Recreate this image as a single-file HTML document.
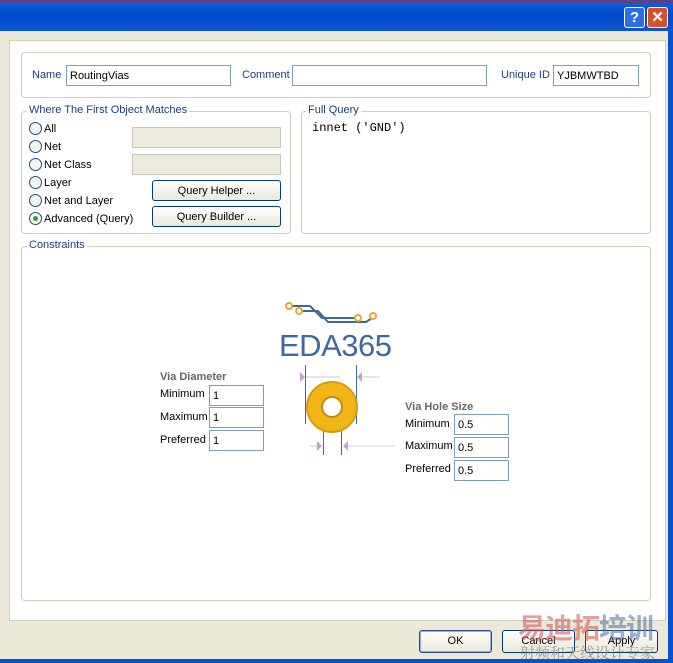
<!DOCTYPE html>
<html><head><style>
*{margin:0;padding:0;box-sizing:border-box}
body{width:673px;height:663px;position:relative;overflow:hidden;background:#ece9d8;font-family:"Liberation Sans",sans-serif;font-size:11px;color:#000}
.a{position:absolute}
.box{position:absolute;border:1px solid #d0d0bf;border-radius:4px}
.leg{position:absolute;background:#fff;padding:0 2px;color:#1a3f7a;font-size:11px}
.inp{position:absolute;border:1px solid #7f9db9;background:#fff;height:21px;padding:4px 3px 0;font-size:11px;line-height:13px}
.lbl{position:absolute;font-size:11px}
.rad{position:absolute;width:13px;height:13px;border:1px solid #1c5180;border-radius:50%;background:#f4f4f0}
.btn{position:absolute;border:1px solid #003c74;border-radius:3px;background:linear-gradient(#fff,#ece9d8);text-align:center;font-size:11px;line-height:20px}
</style></head><body>
<div class="a" style="left:0;top:0;width:673px;height:3px;background:#5a3f8a"></div>
<div class="a" style="left:0;top:3px;width:673px;height:28px;background:linear-gradient(#0a5fe0,#0049c8 40%,#0a54d8)"></div>
<div class="a" style="left:624px;top:7px;width:21px;height:21px;border:1px solid #fff;border-radius:3px;background:#2a6ee8;color:#fff;font-weight:bold;font-size:15px;text-align:center;line-height:19px">?</div>
<div class="a" style="left:647px;top:7px;width:21px;height:21px;border:1px solid #fff;border-radius:3px;background:#d8502a;color:#fff;font-weight:bold;font-size:15px;text-align:center;line-height:19px">✕</div>
<div class="a" style="left:668px;top:31px;width:5px;height:632px;background:#0a4fd0"></div>
<div class="a" style="left:0;top:659px;width:673px;height:4px;background:#0a4fd0"></div>
<div class="a" style="left:9px;top:40px;width:657px;height:581px;background:#fff;border:1px solid #d0d0bf"></div>

<div class="box" style="left:21px;top:52px;width:630px;height:46px"></div>
<div class="lbl" style="left:32px;top:69px;color:#1a3f7a">Name</div>
<div class="inp" style="left:66px;top:65px;width:165px">RoutingVias</div>
<div class="lbl" style="left:242px;top:69px;color:#1a3f7a">Comment</div>
<div class="inp" style="left:292px;top:65px;width:195px"></div>
<div class="lbl" style="left:501px;top:69px;color:#1a3f7a">Unique ID</div>
<div class="inp" style="left:553px;top:65px;width:86px">YJBMWTBD</div>

<div class="box" style="left:21px;top:111px;width:270px;height:123px"></div>
<div class="leg" style="left:27px;top:104px">Where The First Object Matches</div>
<div class="rad" style="left:29px;top:122px"></div><div class="lbl" style="left:44px;top:123px">All</div>
<div class="rad" style="left:29px;top:140px"></div><div class="lbl" style="left:44px;top:141px">Net</div>
<div class="rad" style="left:29px;top:158px"></div><div class="lbl" style="left:44px;top:159px">Net Class</div>
<div class="rad" style="left:29px;top:176px"></div><div class="lbl" style="left:44px;top:177px">Layer</div>
<div class="rad" style="left:29px;top:194px"></div><div class="lbl" style="left:44px;top:195px">Net and Layer</div>
<div class="rad" style="left:29px;top:212px"><div class="a" style="left:3px;top:3px;width:5px;height:5px;border-radius:50%;background:#3a9a3a"></div></div><div class="lbl" style="left:44px;top:213px">Advanced (Query)</div>
<div class="a" style="left:132px;top:127px;width:149px;height:21px;border:1px solid #c9c7ba;background:#ebeadb"></div>
<div class="a" style="left:132px;top:154px;width:149px;height:21px;border:1px solid #c9c7ba;background:#ebeadb"></div>
<div class="btn" style="left:152px;top:180px;width:129px;height:21px">Query Helper ...</div>
<div class="btn" style="left:152px;top:206px;width:129px;height:21px">Query Builder ...</div>

<div class="box" style="left:301px;top:111px;width:350px;height:123px"></div>
<div class="leg" style="left:306px;top:104px">Full Query</div>
<div class="a" style="left:312px;top:121px;font-family:'Liberation Mono',monospace;font-size:12px">innet ('GND')</div>

<div class="box" style="left:21px;top:246px;width:630px;height:355px"></div>
<div class="leg" style="left:27px;top:239px">Constraints</div>

<svg class="a" style="left:280px;top:298px" width="100" height="30">
<path d="M9 8 H30 L42 20 H78" stroke="#3e6a8e" stroke-width="2" fill="none"/>
<path d="M19 13 H38 L48 24 H86 L92 20" stroke="#3e6a8e" stroke-width="2" fill="none"/>
<circle cx="9" cy="8" r="3" fill="#fff" stroke="#e8a830" stroke-width="2"/>
<circle cx="19" cy="13" r="3" fill="#fff" stroke="#e8a830" stroke-width="2"/>
<circle cx="78" cy="20" r="3" fill="#fff" stroke="#e8a830" stroke-width="2"/>
<circle cx="93" cy="18" r="3" fill="#fff" stroke="#e8a830" stroke-width="2"/>
</svg>
<div class="a" style="left:279px;top:328px;font-size:31px;color:#3e6a9e;letter-spacing:-0.5px;line-height:36px">EDA365</div>

<svg class="a" style="left:250px;top:362px" width="170" height="95">
<g stroke="#ccc" stroke-width="1" fill="none">
<line x1="52" y1="15" x2="90" y2="15"/><line x1="112" y1="15" x2="130" y2="15"/>
<line x1="60" y1="84" x2="70" y2="84"/><line x1="95" y1="84" x2="145" y2="84"/>
</g>
<g stroke="#3e6a9e" stroke-width="1"><line x1="55.5" y1="3" x2="55.5" y2="62"/><line x1="106.5" y1="3" x2="106.5" y2="62"/>
<line x1="73.5" y1="60" x2="73.5" y2="93"/><line x1="91.5" y1="60" x2="91.5" y2="93"/></g>
<g fill="#c8a0d0"><path d="M50 10 L55 15 L50 20Z"/><path d="M112 10 L107 15 L112 20Z"/><path d="M67 79 L72 84 L67 89Z"/><path d="M98 79 L93 84 L98 89Z"/></g>
<circle cx="82" cy="45" r="25" fill="#f1b517" stroke="#d69a10" stroke-width="2"/>
<circle cx="82" cy="45" r="10" fill="#fff" stroke="#c08a10" stroke-width="2"/>
</svg>
<div class="lbl" style="left:160px;top:371px;font-weight:bold;color:#666;font-size:11px">Via Diameter</div>
<div class="lbl" style="left:160px;top:388px">Minimum</div><div class="inp" style="left:209px;top:385px;width:55px">1</div>
<div class="lbl" style="left:160px;top:411px">Maximum</div><div class="inp" style="left:209px;top:407px;width:55px">1</div>
<div class="lbl" style="left:160px;top:434px">Preferred</div><div class="inp" style="left:209px;top:430px;width:55px">1</div>
<div class="lbl" style="left:405px;top:401px;font-weight:bold;color:#666">Via Hole Size</div>
<div class="lbl" style="left:405px;top:418px">Minimum</div><div class="inp" style="left:454px;top:414px;width:55px">0.5</div>
<div class="lbl" style="left:405px;top:440px">Maximum</div><div class="inp" style="left:454px;top:437px;width:55px">0.5</div>
<div class="lbl" style="left:405px;top:463px">Preferred</div><div class="inp" style="left:454px;top:460px;width:55px">0.5</div>

<div class="btn" style="left:419px;top:630px;width:73px;height:23px;line-height:21px;border-color:#2a4a90;box-shadow:inset 0 0 0 1px #8ab0f0">OK</div>
<div class="btn" style="left:502px;top:630px;width:73px;height:23px;line-height:21px">Cancel</div>
<div class="btn" style="left:585px;top:630px;width:73px;height:23px;line-height:21px">Apply</div>
<div class="a" style="left:518px;top:612px;font-family:'Noto Sans CJK SC',sans-serif;font-size:28px;font-weight:bold;line-height:30px;color:rgba(210,80,80,.55);letter-spacing:-1px">易迪拓<span style="color:rgba(80,110,170,.55)">培训</span></div>
<div class="a" style="left:520px;top:644px;font-family:'Noto Serif CJK SC',serif;font-size:15px;line-height:17px;color:rgba(120,120,120,.7)">射频和天线设计专家</div>
</body></html>
